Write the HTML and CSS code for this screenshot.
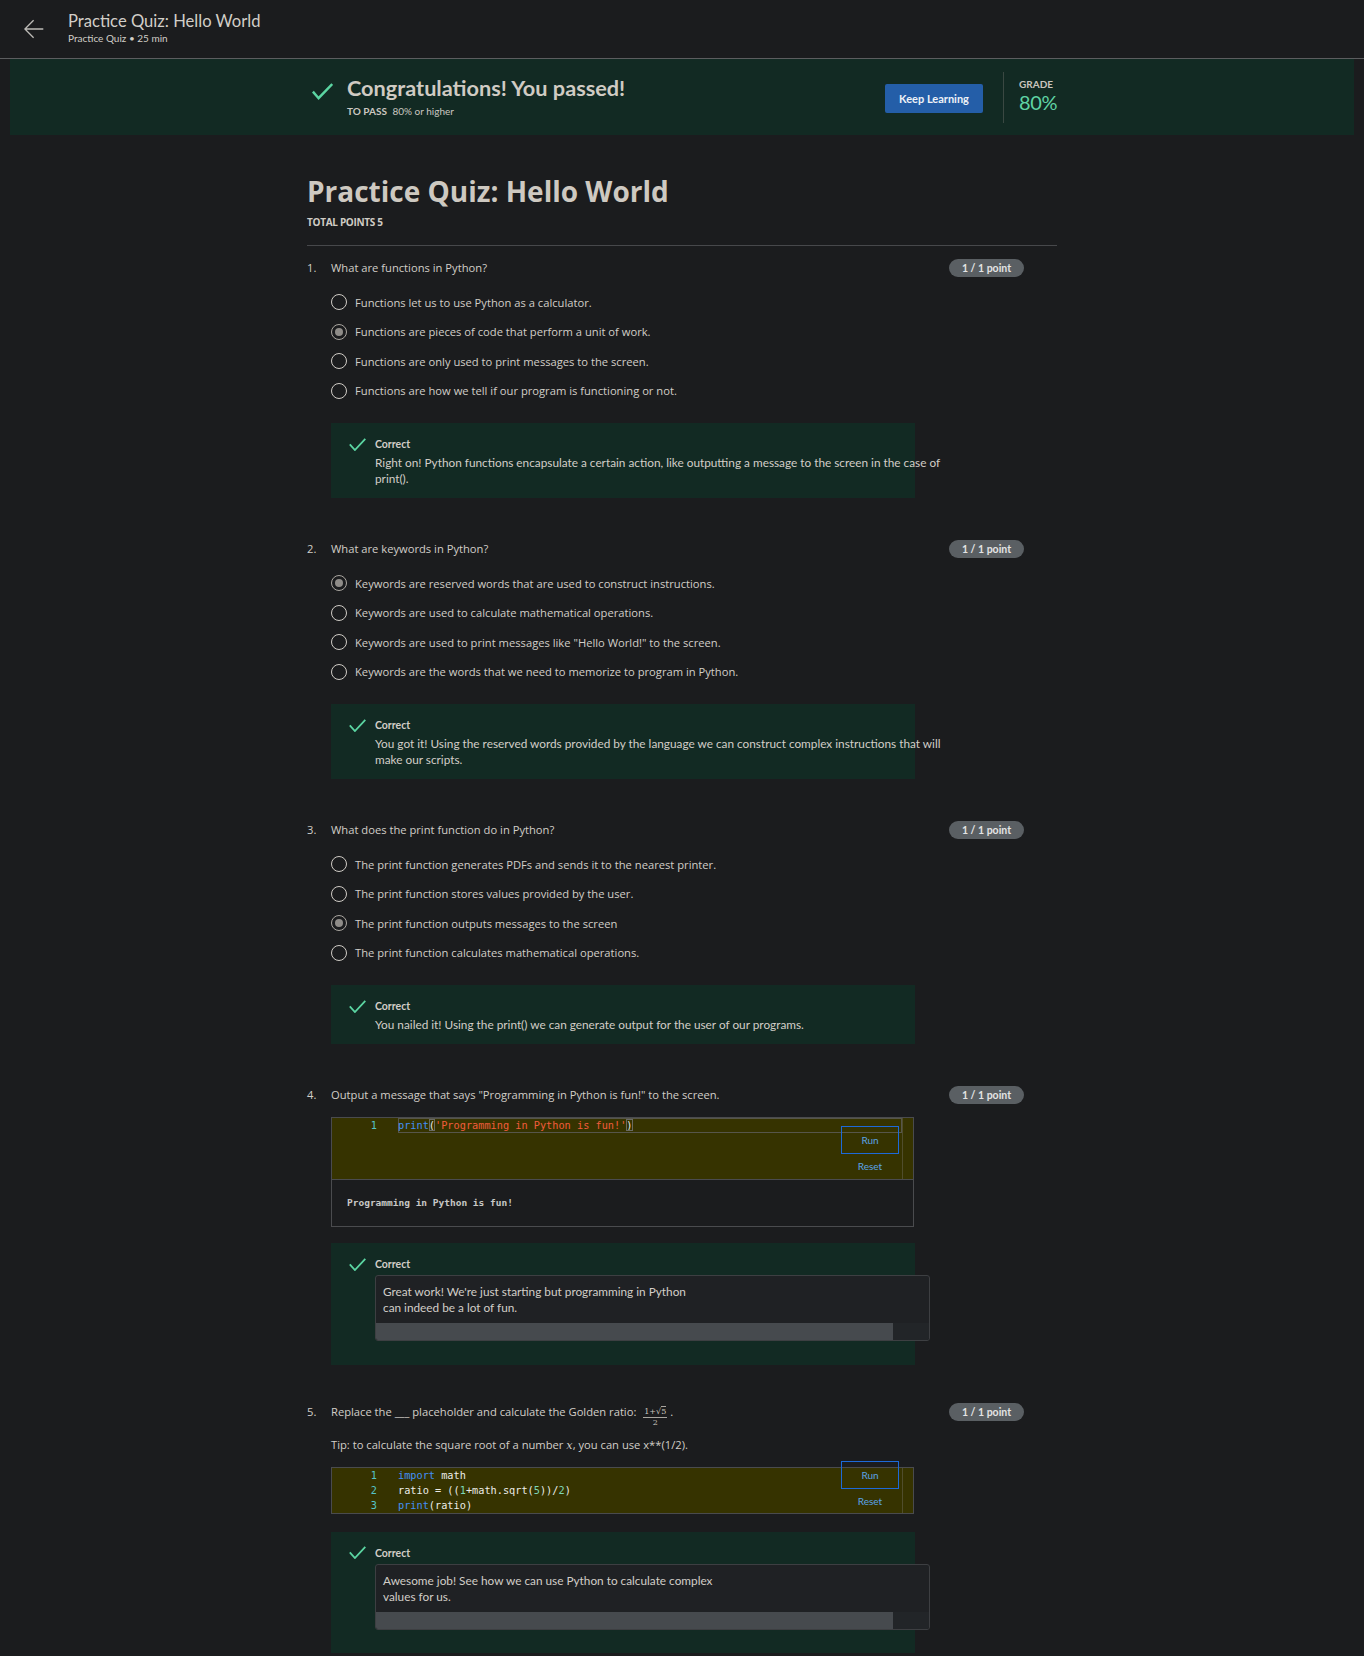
FILE: index.html
```html
<!DOCTYPE html>
<html lang="en">
<head>
<meta charset="utf-8">
<title>Practice Quiz: Hello World</title>
<link rel="stylesheet" href="styles.css">
</head>
<body>
<header class="topbar">
  <a class="back" href="#" aria-label="Back">
    <svg width="20" height="20" viewBox="0 0 20 20"><path d="M19.3 10H0.9M9.6 1.2 0.9 10l8.7 8.8" fill="none" stroke="#bdbbb7" stroke-width="1.3"/></svg>
  </a>
  <div class="topbar-titles">
    <div class="topbar-title">Practice Quiz: Hello World</div>
    <div class="topbar-sub">Practice Quiz • 25 min</div>
  </div>
</header>

<section class="banner">
  <div class="banner-inner">
    <svg class="banner-check" width="21" height="17" viewBox="0 0 21 17"><path d="M0.9 8.6 6.6 15.2 20.2 1" fill="none" stroke="#5bd5a2" stroke-width="2.4"/></svg>
    <div class="banner-text">
      <div class="banner-title">Congratulations! You passed!</div>
      <div class="banner-pass"><strong>TO PASS</strong> 80% or higher</div>
    </div>
    <button class="keep-btn" type="button">Keep Learning</button>
    <div class="banner-divider"></div>
    <div class="grade">
      <div class="grade-label">GRADE</div>
      <div class="grade-value">80%</div>
    </div>
  </div>
</section>

<main class="quiz">
  <h1 class="quiz-title">Practice Quiz: Hello World</h1>
  <div class="quiz-total">TOTAL POINTS 5</div>
  <hr class="quiz-rule">

  <section class="q q--first">
    <div class="q-head">
      <span class="q-num">1.</span>
      <span class="q-text">What are functions in Python?</span>
      <span class="badge">1 / 1 point</span>
    </div>
    <ul class="options">
      <li class="option"><span class="radio"></span>Functions let us to use Python as a calculator.</li>
      <li class="option"><span class="radio is-checked"></span>Functions are pieces of code that perform a unit of work.</li>
      <li class="option"><span class="radio"></span>Functions are only used to print messages to the screen.</li>
      <li class="option"><span class="radio"></span>Functions are how we tell if our program is functioning or not.</li>
    </ul>
    <div class="fb">
      <svg class="fb-check" width="17" height="13" viewBox="0 0 17 13"><path d="M0.8 6.4 5.9 12 16.3 0.8" fill="none" stroke="#5bd5a2" stroke-width="1.8"/></svg>
      <div class="fb-label">Correct</div>
      <div class="fb-text">Right on! Python functions encapsulate a certain action, like outputting a message to the screen in the case of print().</div>
    </div>
  </section>

  <section class="q">
    <div class="q-head">
      <span class="q-num">2.</span>
      <span class="q-text">What are keywords in Python?</span>
      <span class="badge">1 / 1 point</span>
    </div>
    <ul class="options">
      <li class="option"><span class="radio is-checked"></span>Keywords are reserved words that are used to construct instructions.</li>
      <li class="option"><span class="radio"></span>Keywords are used to calculate mathematical operations.</li>
      <li class="option"><span class="radio"></span>Keywords are used to print messages like "Hello World!" to the screen.</li>
      <li class="option"><span class="radio"></span>Keywords are the words that we need to memorize to program in Python.</li>
    </ul>
    <div class="fb">
      <svg class="fb-check" width="17" height="13" viewBox="0 0 17 13"><path d="M0.8 6.4 5.9 12 16.3 0.8" fill="none" stroke="#5bd5a2" stroke-width="1.8"/></svg>
      <div class="fb-label">Correct</div>
      <div class="fb-text">You got it! Using the reserved words provided by the language we can construct complex instructions that will make our scripts.</div>
    </div>
  </section>

  <section class="q">
    <div class="q-head">
      <span class="q-num">3.</span>
      <span class="q-text">What does the print function do in Python?</span>
      <span class="badge">1 / 1 point</span>
    </div>
    <ul class="options">
      <li class="option"><span class="radio"></span>The print function generates PDFs and sends it to the nearest printer.</li>
      <li class="option"><span class="radio"></span>The print function stores values provided by the user.</li>
      <li class="option"><span class="radio is-checked"></span>The print function outputs messages to the screen</li>
      <li class="option"><span class="radio"></span>The print function calculates mathematical operations.</li>
    </ul>
    <div class="fb">
      <svg class="fb-check" width="17" height="13" viewBox="0 0 17 13"><path d="M0.8 6.4 5.9 12 16.3 0.8" fill="none" stroke="#5bd5a2" stroke-width="1.8"/></svg>
      <div class="fb-label">Correct</div>
      <div class="fb-text">You nailed it! Using the print() we can generate output for the user of our programs.</div>
    </div>
  </section>

  <section class="q">
    <div class="q-head">
      <span class="q-num">4.</span>
      <span class="q-text">Output a message that says "Programming in Python is fun!" to the screen.</span>
      <span class="badge">1 / 1 point</span>
    </div>
    <div class="editor">
      <div class="editor-code editor-code--tall">
        <div class="gutter"><div>1</div></div>
        <div class="lines">
          <div class="line is-active"><span class="kw">print</span><span class="bm">(</span><span class="str">'Programming in Python is fun!'</span><span class="bm">)</span></div>
        </div>
        <div class="vscroll"></div>
      </div>
      <div class="editor-output">Programming in Python is fun!</div>
      <div class="editor-actions">
        <button class="run-btn" type="button">Run</button>
        <button class="reset-btn" type="button">Reset</button>
      </div>
    </div>
    <div class="fb fb--box">
      <svg class="fb-check" width="17" height="13" viewBox="0 0 17 13"><path d="M0.8 6.4 5.9 12 16.3 0.8" fill="none" stroke="#5bd5a2" stroke-width="1.8"/></svg>
      <div class="fb-label">Correct</div>
      <div class="fb-box">
        <div class="fb-box-text">Great work! We're just starting but programming in Python<br>can indeed be a lot of fun.</div>
        <div class="hscroll"><div class="hscroll-thumb"></div></div>
      </div>
    </div>
  </section>

  <section class="q q--last">
    <div class="q-head">
      <span class="q-num">5.</span>
      <span class="q-text">Replace the ___ placeholder and calculate the Golden ratio: <span class="frac"><span class="frac-num">1+√<span class="radicand">5</span></span><span class="frac-den">2</span></span> .</span>
      <span class="badge">1 / 1 point</span>
    </div>
    <p class="q-note">Tip: to calculate the square root of a number <i class="mvar">x</i>, you can use x**(1/2).</p>
    <div class="editor editor--short">
      <div class="editor-code">
        <div class="gutter"><div>1</div><div>2</div><div>3</div></div>
        <div class="lines">
          <div class="line"><span class="kw">import</span> math</div>
          <div class="line">ratio = ((<span class="num">1</span>+math.sqrt(<span class="num">5</span>))/<span class="num">2</span>)</div>
          <div class="line"><span class="kw">print</span>(ratio)</div>
        </div>
        <div class="vscroll"></div>
      </div>
      <div class="editor-actions editor-actions--raised">
        <button class="run-btn" type="button">Run</button>
        <button class="reset-btn" type="button">Reset</button>
      </div>
    </div>
    <div class="fb fb--box fb--last">
      <svg class="fb-check" width="17" height="13" viewBox="0 0 17 13"><path d="M0.8 6.4 5.9 12 16.3 0.8" fill="none" stroke="#5bd5a2" stroke-width="1.8"/></svg>
      <div class="fb-label">Correct</div>
      <div class="fb-box">
        <div class="fb-box-text">Awesome job! See how we can use Python to calculate complex<br>values for us.</div>
        <div class="hscroll"><div class="hscroll-thumb"></div></div>
      </div>
    </div>
  </section>
</main>
</body>
</html>
```

FILE: styles.css
```css
* { box-sizing: border-box; }

html, body { margin: 0; padding: 0; }

body {
  background: #1b1c1e;
  color: #d2cec8;
  font-family: "Open Sans", "DejaVu Sans", sans-serif;
  min-height: 1656px;
}

/* ---------- top bar ---------- */
.topbar {
  height: 59px;
  border-bottom: 1px solid #5c5d5f;
  display: flex;
  align-items: flex-start;
  padding: 11px 0 0 24px;
}
.back { display: block; width: 20px; height: 20px; margin-top: 8px; flex: none; }
.back svg { display: block; }
.topbar-titles { margin-left: 24px; font-family: Lato, "Open Sans", sans-serif; color: #d2cec8; }
.topbar-title { font-size: 16.6px; line-height: 20px; }
.topbar-sub { font-size: 10px; line-height: 13px; margin-top: 1px; }

/* ---------- banner ---------- */
.banner { margin: 0 10px; height: 76px; background: #122a23; }
.banner-inner {
  width: 750px;
  height: 100%;
  margin: 0 auto;
  display: flex;
  align-items: center;
}
.banner-check { flex: none; align-self: flex-start; display: block; margin: 24px 14px 0 5px; }
.banner-text { flex: 1; margin-bottom: 2px; font-family: Lato, "Open Sans", sans-serif; }
.banner-title { font-size: 21.7px; line-height: 26px; font-weight: 700; color: #d0cbc3; }
.banner-pass { font-size: 10px; line-height: 13px; margin-top: 4px; color: #cbc7c0; }
.banner-pass strong { font-weight: 700; margin-right: 3px; }
.keep-btn {
  flex: none;
  width: 98px;
  height: 29px;
  margin-top: 3px;
  padding: 0;
  border: 0;
  border-radius: 2px;
  background: #245ea8;
  color: #eef2f7;
  font: 700 11px/29px Lato, "Open Sans", sans-serif;
}
.banner-divider { flex: none; width: 1px; height: 51px; background: #3a4842; margin: 0 15px 0 20px; }
.grade { flex: none; width: 38px; margin-bottom: 3px; font-family: Lato, "Open Sans", sans-serif; }
.grade-label { font-size: 10px; line-height: 13px; font-weight: 700; color: #c9c5be; }
.grade-value { font-size: 20px; line-height: 22px; letter-spacing: -0.3px; color: #5fd3a3; white-space: nowrap; }

/* ---------- quiz ---------- */
.quiz { width: 750px; margin: 0 auto; padding-top: 37px; padding-bottom: 10px; }
.quiz-title { margin: 0; font: 700 28px/38px "Open Sans", sans-serif; color: #cec9c1; }
.quiz-total { margin-top: 5px; font: 700 10px/14px "Open Sans", sans-serif; letter-spacing: -0.3px; color: #d0ccc5; }
.quiz-rule { margin: 16px 0 0; border: 0; border-top: 1px solid #47484b; height: 0; }

.q { margin-top: 42px; }
.q--first { margin-top: 13px; }
.q--last { margin-top: 37.5px; }

.q-head {
  display: flex;
  align-items: center;
  min-height: 18px;
  padding-right: 33px;
  font-size: 11.2px;
  line-height: 16px;
}
.q-num { flex: none; width: 24px; }
.q-text { flex: 1; }
.badge {
  flex: none;
  width: 75px;
  height: 18px;
  border-radius: 9px;
  background: #5a5f63;
  color: #e4e4e4;
  font: 700 10.5px/18px Lato, "Open Sans", sans-serif;
  text-align: center;
}

.frac {
  display: inline-flex;
  flex-direction: column;
  align-items: center;
  vertical-align: 1.5px;
  margin: -7px 0 -8px 4px;
  font: 8px/8px "DejaVu Serif", "Liberation Serif", serif;
  color: #c9c5bf;
}
.frac-num { border-bottom: 1px solid #a9a6a0; padding: 0 1px 1px; }
.frac-den { padding-top: 1px; }
.radicand { border-top: 1px solid #a9a6a0; }

.q-note { margin: 16.8px 0 0 24px; font-size: 11.2px; line-height: 16px; }
.mvar { font-family: "DejaVu Serif", "Liberation Serif", serif; font-style: italic; }

.options { list-style: none; margin: 10.5px 0 0 24px; padding: 0; }
.option { height: 29.5px; display: flex; align-items: center; font-size: 11.2px; }
.radio {
  flex: none;
  width: 16px;
  height: 16px;
  margin-right: 8px;
  border: 1.5px solid #d0ccc6;
  border-radius: 50%;
  display: flex;
  align-items: center;
  justify-content: center;
}
.radio.is-checked { border-color: #aaa6a0; }
.radio.is-checked::after { content: ""; width: 8px; height: 8px; border-radius: 50%; background: #8f8c88; }

/* ---------- feedback ---------- */
.fb {
  margin: 17.5px 0 0 24px;
  width: 584px;
  background: #122a23;
  padding: 13px 0 11px 18px;
  display: grid;
  grid-template-columns: 16px auto;
  column-gap: 10px;
  align-items: center;
  justify-content: start;
}
.fb--box { margin-top: 16.5px; padding-bottom: 24px; }
.fb--last { margin-top: 18px; padding-bottom: 23px; }
.fb-check { grid-column: 1; grid-row: 1; display: block; }
.fb-label { grid-column: 2; grid-row: 1; font: 700 10.5px/16px Lato, "Open Sans", sans-serif; color: #d2cec8; }
.fb-text { grid-column: 2; width: 580px; margin-top: 3px; font: 11.8px/16px Lato, "Open Sans", sans-serif; color: #d2cec8; }
.fb-box {
  grid-column: 2;
  width: 555px;
  margin-top: 3px;
  background: #1f2124;
  border: 1px solid #3d3f42;
  border-radius: 3px;
  overflow: hidden;
}
.fb-box-text { padding: 8px 7px 7px; font: 11.8px/16px Lato, "Open Sans", sans-serif; color: #d2cec8; white-space: nowrap; }
.hscroll { height: 17px; background: #222528; }
.hscroll-thumb { width: 517px; height: 100%; background: #464a4e; }

/* ---------- code editor ---------- */
.editor {
  position: relative;
  margin: 12.5px 0 0 24px;
  width: 583px;
  border: 1px solid #4a4b4e;
}
.editor--short { margin-top: 12.7px; }
.editor-code {
  display: flex;
  background: #363300;
  font: 10.25px/15px "DejaVu Sans Mono", "Liberation Mono", monospace;
}
.editor-code--tall { height: 61px; }
.gutter { flex: none; width: 45px; text-align: right; color: #55c3c8; }
.lines { flex: 1; margin-left: 21px; color: #ecece8; }
.line { height: 15px; white-space: pre; }
.line.is-active { box-shadow: inset 0 0 0 1px #57564a; }
.vscroll { flex: none; width: 11px; border-left: 1px solid #504d2c; }
.kw { color: #4290f5; }
.str { color: #f05c3c; }
.num { color: #7dd6b8; }
.bm { outline: 1px solid #6a6a62; outline-offset: -1px; }

.editor-output {
  height: 47px;
  border-top: 1px solid #4a4b4e;
  display: flex;
  align-items: center;
  padding-left: 15px;
  font: 700 9.5px/15px "DejaVu Sans Mono", "Liberation Mono", monospace;
  color: #c8c8c6;
}

.editor-actions {
  position: absolute;
  top: 8px;
  right: 14px;
  width: 58px;
  display: flex;
  flex-direction: column;
  align-items: center;
}
.editor-actions--raised { top: -7px; }
.run-btn {
  width: 58px;
  height: 28px;
  padding: 0;
  border: 1px solid #1d6ad8;
  background: transparent;
  color: #5aa4e6;
  font: 10px/26px Lato, "Open Sans", sans-serif;
}
.reset-btn {
  margin-top: 6px;
  padding: 0;
  border: 0;
  background: none;
  color: #5aa4e6;
  font: 10px/13px Lato, "Open Sans", sans-serif;
}
```
